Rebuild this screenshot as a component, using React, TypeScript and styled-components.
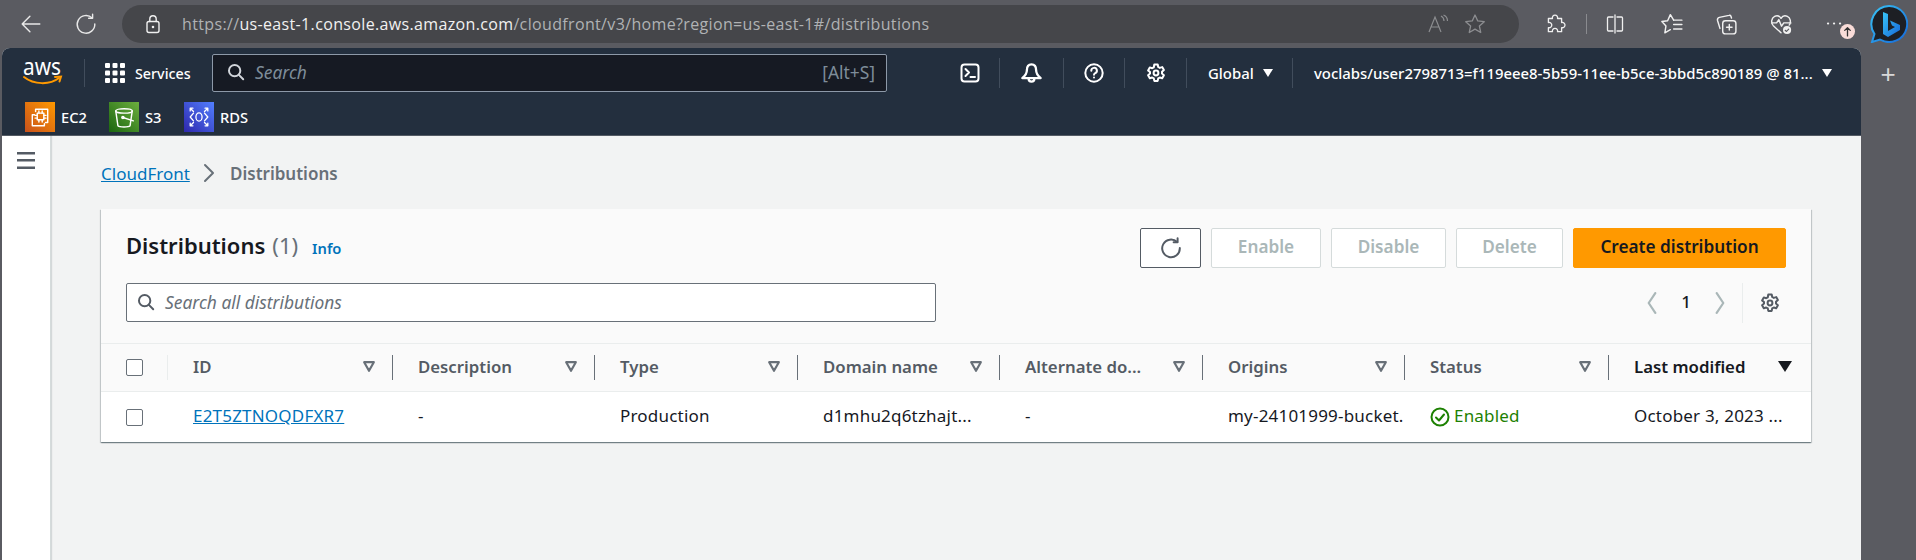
import React from "react";
import styled, { createGlobalStyle } from "styled-components";

const Global = createGlobalStyle`
  html, body { margin: 0; padding: 0; background: #5a5b61; }
  body { font-family: "Noto Sans", "Open Sans", sans-serif; }
  * { box-sizing: border-box; }
`;

const Page = styled.div`
  position: relative;
  width: 1916px;
  height: 560px;
  overflow: hidden;
  background: #5a5b61;
  display: flex;
  flex-direction: column;
`;

/* browser chrome */
const BrowserBar = styled.div`
  height: 48px;
  flex: none;
  display: flex;
  align-items: center;
`;
const Slot = styled.div<{ $w: number; $ml?: number }>`
  position: relative;
  width: ${(p) => p.$w}px;
  margin-left: ${(p) => p.$ml ?? 0}px;
  flex: none;
  display: flex;
  align-items: center;
  justify-content: center;
`;
const AddressBar = styled.div`
  width: 1397px;
  height: 38px;
  border-radius: 19px;
  background: #45464a;
  display: flex;
  align-items: center;
  flex: none;
  padding-left: 21px;
`;
const Url = styled.div`
  margin-left: 19px;
  width: 1160px;
  font-family: "Open Sans", sans-serif;
  font-size: 16px;
  letter-spacing: 0.35px;
  color: #b0b2b4;
  white-space: nowrap;
  b { font-weight: 400; color: #f1f1f1; }
`;
const BarDivider = styled.div`
  width: 1px;
  height: 20px;
  margin-left: 7px;
  flex: none;
  background: #8a8b8f;
`;
const UpdateBadge = styled.div`
  position: absolute;
  left: 29px;
  top: 10px;
  width: 15px;
  height: 15px;
  border-radius: 50%;
  background: #f9dcd8;
  display: flex;
  align-items: center;
  justify-content: center;
`;

/* console */
const Console = styled.div`
  width: 1859px;
  margin-left: 2px;
  flex: 1;
  display: flex;
  flex-direction: column;
  border-radius: 8px 8px 0 0;
  overflow: hidden;
  background: #f2f3f3;
`;
const TopNav = styled.div`
  height: 48px;
  padding-top: 2px;
  flex: none;
  background: #232f3e;
  display: flex;
  align-items: center;
  color: #fff;
`;
const LogoBox = styled.div`
  margin-left: 21px;
  width: 40px;
  height: 28px;
  flex: none;
`;
const NavRule = styled.div`
  width: 1px;
  height: 28px;
  margin-left: 21px;
  background: #414d5c;
  flex: none;
`;
const ServicesBtn = styled.div`
  margin-left: 20px;
  width: 107px;
  flex: none;
  display: flex;
  align-items: center;
  gap: 10px;
  font-size: 14.3px;
  font-weight: 500;
  color: #fff;
`;
const NavSearch = styled.div`
  width: 675px;
  height: 38px;
  flex: none;
  border: 1px solid #8d99a8;
  border-radius: 2px;
  background: #161a23;
  display: flex;
  align-items: center;
  padding: 0 11px 2px 14px;
  gap: 10px;
  font-size: 17.4px;
  color: #7e8d9a;
`;
const NavSearchText = styled.span`
  flex: 1;
  font-style: italic;
`;
const NavCell = styled.div<{ $w: number; $ml?: number }>`
  width: ${(p) => p.$w}px;
  margin-left: ${(p) => p.$ml ?? 0}px;
  height: 30px;
  flex: none;
  display: flex;
  align-items: center;
  justify-content: center;
  border-right: 1px solid #414d5c;
`;
const NavTextCell = styled.div<{ $w: number; $noRule?: boolean }>`
  width: ${(p) => p.$w}px;
  height: 30px;
  flex: none;
  padding-left: 21px;
  display: flex;
  align-items: center;
  gap: 9px;
  font-size: 14.9px;
  font-weight: 500;
  color: #fff;
  white-space: nowrap;
  border-right: ${(p) => (p.$noRule ? "none" : "1px solid #414d5c")};
`;
const Caret = styled.span<{ $c?: string; $big?: boolean }>`
  width: 0;
  height: 0;
  flex: none;
  border-left: ${(p) => (p.$big ? 7 : 5)}px solid transparent;
  border-right: ${(p) => (p.$big ? 7 : 5)}px solid transparent;
  border-top: ${(p) => (p.$big ? 11 : 8)}px solid ${(p) => p.$c ?? "#fff"};
`;
const ShortcutBar = styled.div`
  height: 40px;
  flex: none;
  background: #232f3e;
  border-bottom: 1px solid #545b64;
  display: flex;
  align-items: flex-start;
  padding: 6px 0 0 23px;
  color: #fff;
`;
const Shortcut = styled.div<{ $w: number }>`
  width: ${(p) => p.$w}px;
  flex: none;
  display: flex;
  align-items: center;
  gap: 6px;
  font-size: 14.7px;
  font-weight: 500;
`;
const ServiceIcon = styled.div<{ $from: string; $to: string }>`
  width: 30px;
  height: 30px;
  flex: none;
  background: linear-gradient(45deg, ${(p) => p.$from}, ${(p) => p.$to});
  display: flex;
  align-items: center;
  justify-content: center;
`;

/* main */
const Body = styled.div`
  flex: 1;
  display: flex;
  min-height: 0;
`;
const Sidebar = styled.div`
  width: 49px;
  flex: none;
  background: #fff;
  border-right: 1px solid #d5dbdb;
  box-shadow: 1px 0 1px rgba(0, 27, 36, 0.12);
  padding: 16px 0 0 15px;
`;
const Content = styled.div`
  flex: 1;
  padding: 24px 50px 0 50px;
  min-width: 0;
`;
const Crumbs = styled.div`
  height: 28px;
  padding-bottom: 2px;
  display: flex;
  align-items: center;
  font-size: 17px;
`;
const CrumbLink = styled.a`
  color: #0073bb;
  text-decoration: underline;
  width: 89px;
  flex: none;
  margin-right: 9px;
`;
const CrumbCurrent = styled.span`
  margin-left: 11px;
  color: #687078;
  font-weight: 600;
`;
const Card = styled.div`
  margin-top: 21px;
  background: #fafafa;
  box-shadow: 0 1px 1px 0 rgba(0, 28, 36, 0.35), 1px 1px 1px 0 rgba(0, 28, 36, 0.15),
    -1px 1px 1px 0 rgba(0, 28, 36, 0.15);
`;
const CardHead = styled.div`
  padding: 19px 25px 21px;
  border-bottom: 1px solid #eaeded;
`;
const HeadRow = styled.div`
  display: flex;
  align-items: center;
  height: 40px;
`;
const Title = styled.h1`
  margin: -6px 0 0;
  font-size: 22px;
  font-weight: 600;
  color: #16191f;
  line-height: 36px;
`;
const Count = styled.span`
  font-weight: 400;
  color: #687078;
  margin-left: 7px;
`;
const InfoLink = styled.a`
  margin-left: 14px;
  font-size: 14.7px;
  font-weight: 600;
  color: #0073bb;
`;
const Actions = styled.div`
  margin-left: auto;
  display: flex;
  gap: 10px;
`;
const Btn = styled.button<{ $w: number; $kind?: "primary" | "disabled" | "icon" }>`
  width: ${(p) => p.$w}px;
  height: 40px;
  padding: 0 0 ${(p) => (p.$kind === "icon" ? 0 : 3)}px;
  font-family: inherit;
  font-size: 17.2px;
  font-weight: 600;
  border-radius: 2px;
  display: flex;
  align-items: center;
  justify-content: center;
  background: ${(p) => (p.$kind === "primary" ? "#ff9900" : "#fff")};
  color: ${(p) => (p.$kind === "primary" ? "#16191f" : "#aab7b8")};
  border: 1px solid
    ${(p) => (p.$kind === "primary" ? "#ff9900" : p.$kind === "icon" ? "#545b64" : "#d5dbdb")};
`;
const FindRow = styled.div`
  margin-top: 15px;
  height: 39px;
  display: flex;
  align-items: center;
`;
const FindBox = styled.div`
  width: 810px;
  height: 39px;
  border: 1px solid #687078;
  border-radius: 2px;
  background: #fff;
  display: flex;
  align-items: center;
  gap: 10px;
  padding: 0 0 1px 10px;
  font-size: 17.4px;
  font-style: italic;
  color: #687078;
`;
const Pager = styled.div`
  margin-left: auto;
  padding-right: 6px;
  display: flex;
  align-items: center;
  height: 40px;
  color: #16191f;
  font-size: 17px;
  font-weight: 500;
`;
const PageNum = styled.span`
  width: 46px;
  padding-bottom: 2px;
  text-align: center;
`;
const PagerRule = styled.div`
  width: 1px;
  height: 40px;
  margin-left: 11px;
  margin-right: 17px;
  background: #eaeded;
`;
const cols = "67px 225px 202px 203px 202px 203px 202px 204px 202px";
const HeadGrid = styled.div`
  display: grid;
  grid-template-columns: ${cols};
  height: 48px;
  align-items: center;
  background: #fafafa;
  border-bottom: 1px solid #eaeded;
`;
const RowGrid = styled.div`
  display: grid;
  grid-template-columns: ${cols};
  height: 50px;
  align-items: center;
  background: #fff;
  font-size: 17px;
  letter-spacing: 0.2px;
  color: #16191f;
`;
const CheckCell = styled.div<{ $rule?: boolean }>`
  padding-left: 25px;
  height: 25px;
  display: flex;
  align-items: center;
  border-right: ${(p) => (p.$rule ? "1px solid #eaeded" : "none")};
`;
const Check = styled.span`
  width: 17px;
  height: 17px;
  border: 1px solid #687078;
  border-radius: 2px;
  background: #fff;
`;
const Th = styled.div<{ $active?: boolean; $last?: boolean }>`
  height: 25px;
  padding: 0 ${(p) => (p.$last ? 19 : 17)}px 2px 25px;
  display: flex;
  align-items: center;
  justify-content: space-between;
  font-size: 16.8px;
  font-weight: 600;
  white-space: nowrap;
  color: ${(p) => (p.$active ? "#16191f" : "#545b64")};
  border-right: ${(p) => (p.$last ? "none" : "1px solid #687078")};
`;
const Td = styled.div`
  padding: 0 0 3px 25px;
  white-space: nowrap;
  overflow: hidden;
`;
const IdLink = styled.a`
  color: #0073bb;
  text-decoration: underline;
`;
const StatusIcon = styled.span`
  display: flex;
  padding-top: 3px;
`;
const Status = styled.div`
  padding: 0 0 3px 25px;
  display: flex;
  align-items: center;
  gap: 4px;
  color: #1d8102;
  white-space: nowrap;
`;
const PlusOverlay = styled.div`
  position: absolute;
  left: 1878px;
  top: 56px;
  width: 20px;
  text-align: center;
  font-family: "Liberation Sans", sans-serif;
  font-size: 26px;
  font-weight: 300;
  line-height: 36px;
  color: #d8d8d8;
`;

const Ico = ({ size = 20, sw = 1.5, color = "#fff", children, vb = 20 }: { size?: number; sw?: number; color?: string; children: React.ReactNode; vb?: number }) => (
  <svg width={size} height={size} viewBox={`0 0 ${vb} ${vb}`} fill="none" stroke={color} strokeWidth={sw} strokeLinecap="round" strokeLinejoin="round">
    {children}
  </svg>
);

const Gear = ({ size = 20, color = "#fff", sw = 2 }: { size?: number; color?: string; sw?: number }) => (
  <Ico size={size} color={color} sw={sw}>
    <path d="M8.3 1.5h3.4l.5 2.5 1.6.9 2.4-.8 1.7 3-1.9 1.7v1.8l1.9 1.7-1.7 3-2.4-.8-1.6.9-.5 2.5H8.3l-.5-2.5-1.6-.9-2.4.8-1.7-3 1.9-1.7V9.1L2.1 7.4l1.7-3 2.4.8 1.6-.9z" />
    <circle cx="10" cy="10" r="2.4" />
  </Ico>
);

const Filter = () => (
  <svg width="12" height="11" viewBox="0 0 12 11">
    <path d="M1.2 1.2h9.6L6 9.8z" fill="none" stroke="#687078" strokeWidth="2.2" strokeLinejoin="round" />
  </svg>
);

const Refresh = ({ color, size = 22, sw = 1.6 }: { color: string; size?: number; sw?: number }) => (
  <Ico size={size} color={color} sw={sw}>
    <path d="M15.6 4.6A8 8 0 1 0 18 10" />
    <path d="M16 1.2v3.6h-3.6" />
  </Ico>
);

const Search = ({ color, size = 18 }: { color: string; size?: number }) => (
  <Ico size={size} color={color} sw={2.2}>
    <circle cx="8.5" cy="8.5" r="6.3" />
    <path d="M13.2 13.2 18 18" />
  </Ico>
);

const columns = ["ID", "Description", "Type", "Domain name", "Alternate do...", "Origins", "Status"];

export default function App() {
  return (
    <Page>
      <Global />
      <BrowserBar>
        <Slot $w={42} $ml={10}>
          <Ico size={22} color="#e8e8e8" sw={1.3}>
            <path d="M18 10H2M9 3l-7 7 7 7" />
          </Ico>
        </Slot>
        <Slot $w={40} $ml={14}>
          <Refresh color="#e8e8e8" size={22} sw={1.3} />
        </Slot>
        <Slot $w={16} />
        <AddressBar>
          <Ico size={20} color="#f0f0f0" sw={1.4}>
            <rect x="4" y="7.5" width="12" height="11" rx="2" />
            <path d="M6.8 7.5V5a3.2 3.2 0 0 1 6.4 0v2.5" />
            <circle cx="10" cy="13" r=".6" fill="#f0f0f0" />
          </Ico>
          <Url>
            https://<b>us-east-1.console.aws.amazon.com</b>/cloudfront/v3/home?region=us-east-1#/distributions
          </Url>
          <Slot $w={26} $ml={84}>
            <svg width="22" height="20" viewBox="0 0 22 20" fill="none" stroke="#8c8d90" strokeWidth="1.2">
              <path d="M1 18 7 3l6 15M3.2 13h7.6" />
              <path d="M13 2c2 1 3 2.6 3 5M15.5 1c2.4 1 4 3.2 4 6" />
            </svg>
          </Slot>
          <Slot $w={26} $ml={10}>
            <Ico size={22} color="#8c8d90" sw={1.2}>
              <path d="m10 1.8 2.5 5.4 5.9.7-4.4 4 1.2 5.8-5.2-3-5.2 3 1.2-5.8-4.400-4 5.900-.7z" />
            </Ico>
          </Slot>
        </AddressBar>
        <Slot $w={48} $ml={12}>
          <Ico size={22} color="#f0f0f0" sw={1.2}>
            <path d="M4 5h3.700a2.400 2.400 0 1 1 4.600 0H16v3.700a2.400 2.400 0 1 1 0 4.600V17h-3.700a2.400 2.400 0 1 0-4.600 0H4v-3.700a2.400 2.400 0 1 0 0-4.600z" />
          </Ico>
        </Slot>
        <BarDivider />
        <Slot $w={56}>
          <Ico size={20} color="#f0f0f0" sw={1.3}>
            <path d="M10 1v18M8 3H3.500a1 1 0 0 0-1 1v12a1 1 0 0 0 1 1H8M12 3h4.500a1 1 0 0 1 1 1v12a1 1 0 0 1-1 1H12" />
          </Ico>
        </Slot>
        <Slot $w={58}>
          <Ico size={22} color="#f0f0f0" sw={1.3}>
            <path d="M11.500 6.500 8.500 1.500 6 7 .8 7.800 4.500 11.800 3.500 18 8.500 15.200" />
            <path d="M11.500 6.500H19M11.500 10.500H19M11.500 14.500H19" />
          </Ico>
        </Slot>
        <Slot $w={50}>
          <Ico size={22} color="#f0f0f0" sw={1.3}>
            <rect x="7" y="7" width="12" height="12" rx="2.500" />
            <path d="M13 10.500v5M10.500 13h5M15 4.500l-.5-1.500c-.3-.8-1-1-1.800-.8L4 4c-1.500.4-2 1.500-1.700 2.800L4.500 14" />
          </Ico>
        </Slot>
        <Slot $w={60}>
          <Ico size={22} color="#f0f0f0" sw={1.3}>
            <path d="M10 18 3 11.500C.8 9 1 4.500 4.200 3c2.300-1 4.600-.2 5.800 1.800C11.200 2.800 13.500 2 15.800 3c3 1.400 3.400 5.500 1.700 8" />
            <path d="M1.500 9H6l2-3 2.500 6 2-3H19" />
            <circle cx="15.500" cy="15.500" r="3.700" fill="#f0f0f0" stroke="none" />
            <path d="m13.800 15.700 1.200 1.100 2-2.200" stroke="#5a5b61" strokeWidth="1" />
          </Ico>
        </Slot>
        <Slot $w={48}>
          <Ico size={20} color="#f0f0f0" sw={2.2}>
            <path d="M3 9.500h.1M9 9.500h.1M15 9.500h.1" />
          </Ico>
          <UpdateBadge>
            <Ico size={11} color="#333" sw={2.4}>
              <path d="M10 18V3M5 8l5-5 5 5" />
            </Ico>
          </UpdateBadge>
        </Slot>
        <Slot $w={38} $ml={11}>
          <svg width="38" height="38" viewBox="0 0 38 38">
            <defs>
              <linearGradient id="bingG" x1="0" y1="0" x2="1" y2="1">
                <stop offset="0" stopColor="#38c3f5" />
                <stop offset="1" stopColor="#1668d8" />
              </linearGradient>
            </defs>
            <path d="M19 1a18 18 0 1 1-9 33.500L2 37l2.500-8A18 18 0 0 1 19 1z" fill="#1d1f24" stroke="url(#bingG)" strokeWidth="2" />
            <path d="M13 7l5 2v17l7-4-3-1.500-2-5 10 4.500v5L18 32l-5-3z" fill="url(#bingG)" />
          </svg>
        </Slot>
      </BrowserBar>

      <Console>
        <TopNav>
          <LogoBox>
            <svg width="40" height="28" viewBox="0 0 40 28" overflow="visible">
              <text x="0" y="16" fontFamily="Noto Sans, sans-serif" fontSize="24" fill="#fff" textLength="38" lengthAdjust="spacingAndGlyphs">aws</text>
              <path d="M1 18c10 8 26 8 35 1" fill="none" stroke="#ff9900" strokeWidth="2" strokeLinecap="round" />
              <path d="M32 18l6-.5-1.500 5" fill="none" stroke="#ff9900" strokeWidth="2" strokeLinecap="round" />
            </svg>
          </LogoBox>
          <NavRule />
          <ServicesBtn>
            <svg width="20" height="20" viewBox="0 0 20 20" fill="#fff">
              {[0, 7.500, 15].flatMap((y) =>
                [0, 7.500, 15].map((x) => <rect key={`${x}-${y}`} x={x} y={y} width="5" height="5" rx="1" />)
              )}
            </svg>
            Services
          </ServicesBtn>
          <NavSearch>
            <Search color="#d1d5db" size={18} />
            <NavSearchText>Search</NavSearchText>
            [Alt+S]
          </NavSearch>
          <NavCell $w={60} $ml={53}>
            <Ico size={20} sw={2}>
              <rect x="1.500" y="1.500" width="17" height="17" rx="3" />
              <path d="m5.500 6 3.500 3.500L5.500 13M10.500 14H15" />
            </Ico>
          </NavCell>
          <NavCell $w={64}>
            <Ico size={23} sw={2}>
              <path d="M10 2c-3 0-4 2.500-4 5 0 3-1.500 5-4 7h16c-2.500-2-4-4-4-7 0-2.500-1-5-4-5z" />
              <path d="M7.500 14.500a2.500 2.500 0 0 0 5 0" />
            </Ico>
          </NavCell>
          <NavCell $w={61}>
            <Ico size={20} sw={2}>
              <circle cx="10" cy="10" r="8.700" />
              <path d="M7.300 7.700A2.800 2.800 0 1 1 11 10.300c-.7.300-1 .8-1 1.500" />
              <path d="M10 14.500h.01" />
            </Ico>
          </NavCell>
          <NavCell $w={62}>
            <Gear />
          </NavCell>
          <NavTextCell $w={106}>
            Global
            <Caret />
          </NavTextCell>
          <NavTextCell $w={560} $noRule>
            voclabs/user2798713=f119eee8-5b59-11ee-b5ce-3bbd5c890189 @ 81...
            <Caret />
          </NavTextCell>
        </TopNav>
        <ShortcutBar>
          <Shortcut $w={84}>
            <ServiceIcon $from="#c8511b" $to="#ff9900">
              <Ico size={22} sw={1.300}>
                <rect x="7.500" y="6.500" width="6" height="6" />
                <path d="M9 4.500V6.500M12 4.500V6.500M9 12.500v2M12 12.500v2M15.500 8.500h-2M15.500 11h-2M7.500 8.500h-2M7.500 11h-2" />
                <path d="M6 3h11v12h-2M6 3v2M3 8v10h11v-2M3 8h2" />
              </Ico>
            </ServiceIcon>
            EC2
          </Shortcut>
          <Shortcut $w={75}>
            <ServiceIcon $from="#1b660f" $to="#6cae3e">
              <Ico size={22} sw={1.300}>
                <ellipse cx="10" cy="4.500" rx="7.500" ry="2" />
                <path d="M2.500 4.500 4.500 18c1.500 1.500 9.500 1.500 11 0l2-13.500" />
                <path d="M9 10.500l9.500 3" />
                <circle cx="9" cy="10.500" r="1" />
              </Ico>
            </ServiceIcon>
            S3
          </Shortcut>
          <Shortcut $w={90}>
            <ServiceIcon $from="#2e27ad" $to="#527fff">
              <Ico size={22} sw={1.200}>
                <ellipse cx="10" cy="10" rx="2.800" ry="3.800" />
                <path d="M5 6.500 2 10l3 3.500M15 6.500 18 10l-3 3.500M2 2l3 3M2 2v2.500M2 2h2.500M18 2l-3 3M18 2v2.500M18 2h-2.500M2 18l3-3M2 18v-2.500M2 18h2.500M18 18l-3-3M18 18v-2.500M18 18h-2.500" />
              </Ico>
            </ServiceIcon>
            RDS
          </Shortcut>
        </ShortcutBar>
        <Body>
          <Sidebar>
            <svg width="18" height="17" viewBox="0 0 18 17" fill="#545b64">
              <rect y="0" width="18" height="2.500" />
              <rect y="7" width="18" height="2.500" />
              <rect y="14.500" width="18" height="2.500" />
            </svg>
          </Sidebar>
          <Content>
            <Crumbs>
              <CrumbLink>CloudFront</CrumbLink>
              <Ico size={20} color="#687078" sw={2}>
                <path d="m6 2 8 8-8 8" />
              </Ico>
              <CrumbCurrent>Distributions</CrumbCurrent>
            </Crumbs>
            <Card>
              <CardHead>
                <HeadRow>
                  <Title>
                    Distributions<Count>(1)</Count>
                  </Title>
                  <InfoLink>Info</InfoLink>
                  <Actions>
                    <Btn $w={61} $kind="icon">
                      <Refresh color="#545b64" size={22} sw={1.800} />
                    </Btn>
                    <Btn $w={110} $kind="disabled">Enable</Btn>
                    <Btn $w={115} $kind="disabled">Disable</Btn>
                    <Btn $w={107} $kind="disabled">Delete</Btn>
                    <Btn $w={213} $kind="primary">Create distribution</Btn>
                  </Actions>
                </HeadRow>
                <FindRow>
                  <FindBox>
                    <Search color="#545b64" size={18} />
                    Search all distributions
                  </FindBox>
                  <Pager>
                    <Ico size={22} color="#aab7b8" sw={2}>
                      <path d="M13 1 7 10l6 9" />
                    </Ico>
                    <PageNum>1</PageNum>
                    <Ico size={22} color="#aab7b8" sw={2}>
                      <path d="m7 1 6 9-6 9" />
                    </Ico>
                    <PagerRule />
                    <Gear size={20} color="#545b64" />
                  </Pager>
                </FindRow>
              </CardHead>
              <HeadGrid>
                <CheckCell $rule>
                  <Check />
                </CheckCell>
                {columns.map((c) => (
                  <Th key={c}>
                    {c}
                    <Filter />
                  </Th>
                ))}
                <Th $active $last>
                  Last modified
                  <Caret $c="#16191f" $big />
                </Th>
              </HeadGrid>
              <RowGrid>
                <CheckCell>
                  <Check />
                </CheckCell>
                <Td>
                  <IdLink>E2T5ZTNOQDFXR7</IdLink>
                </Td>
                <Td>-</Td>
                <Td>Production</Td>
                <Td>d1mhu2q6tzhajt...</Td>
                <Td>-</Td>
                <Td>my-24101999-bucket.</Td>
                <Status>
                  <StatusIcon>
                    <Ico size={20} color="#1d8102" sw={2}>
                      <circle cx="10" cy="10" r="8.500" />
                      <path d="m6 10.500 3 3 5-6" />
                    </Ico>
                  </StatusIcon>
                  Enabled
                </Status>
                <Td>October 3, 2023 ...</Td>
              </RowGrid>
            </Card>
          </Content>
        </Body>
      </Console>
      <PlusOverlay>+</PlusOverlay>
    </Page>
  );
}
